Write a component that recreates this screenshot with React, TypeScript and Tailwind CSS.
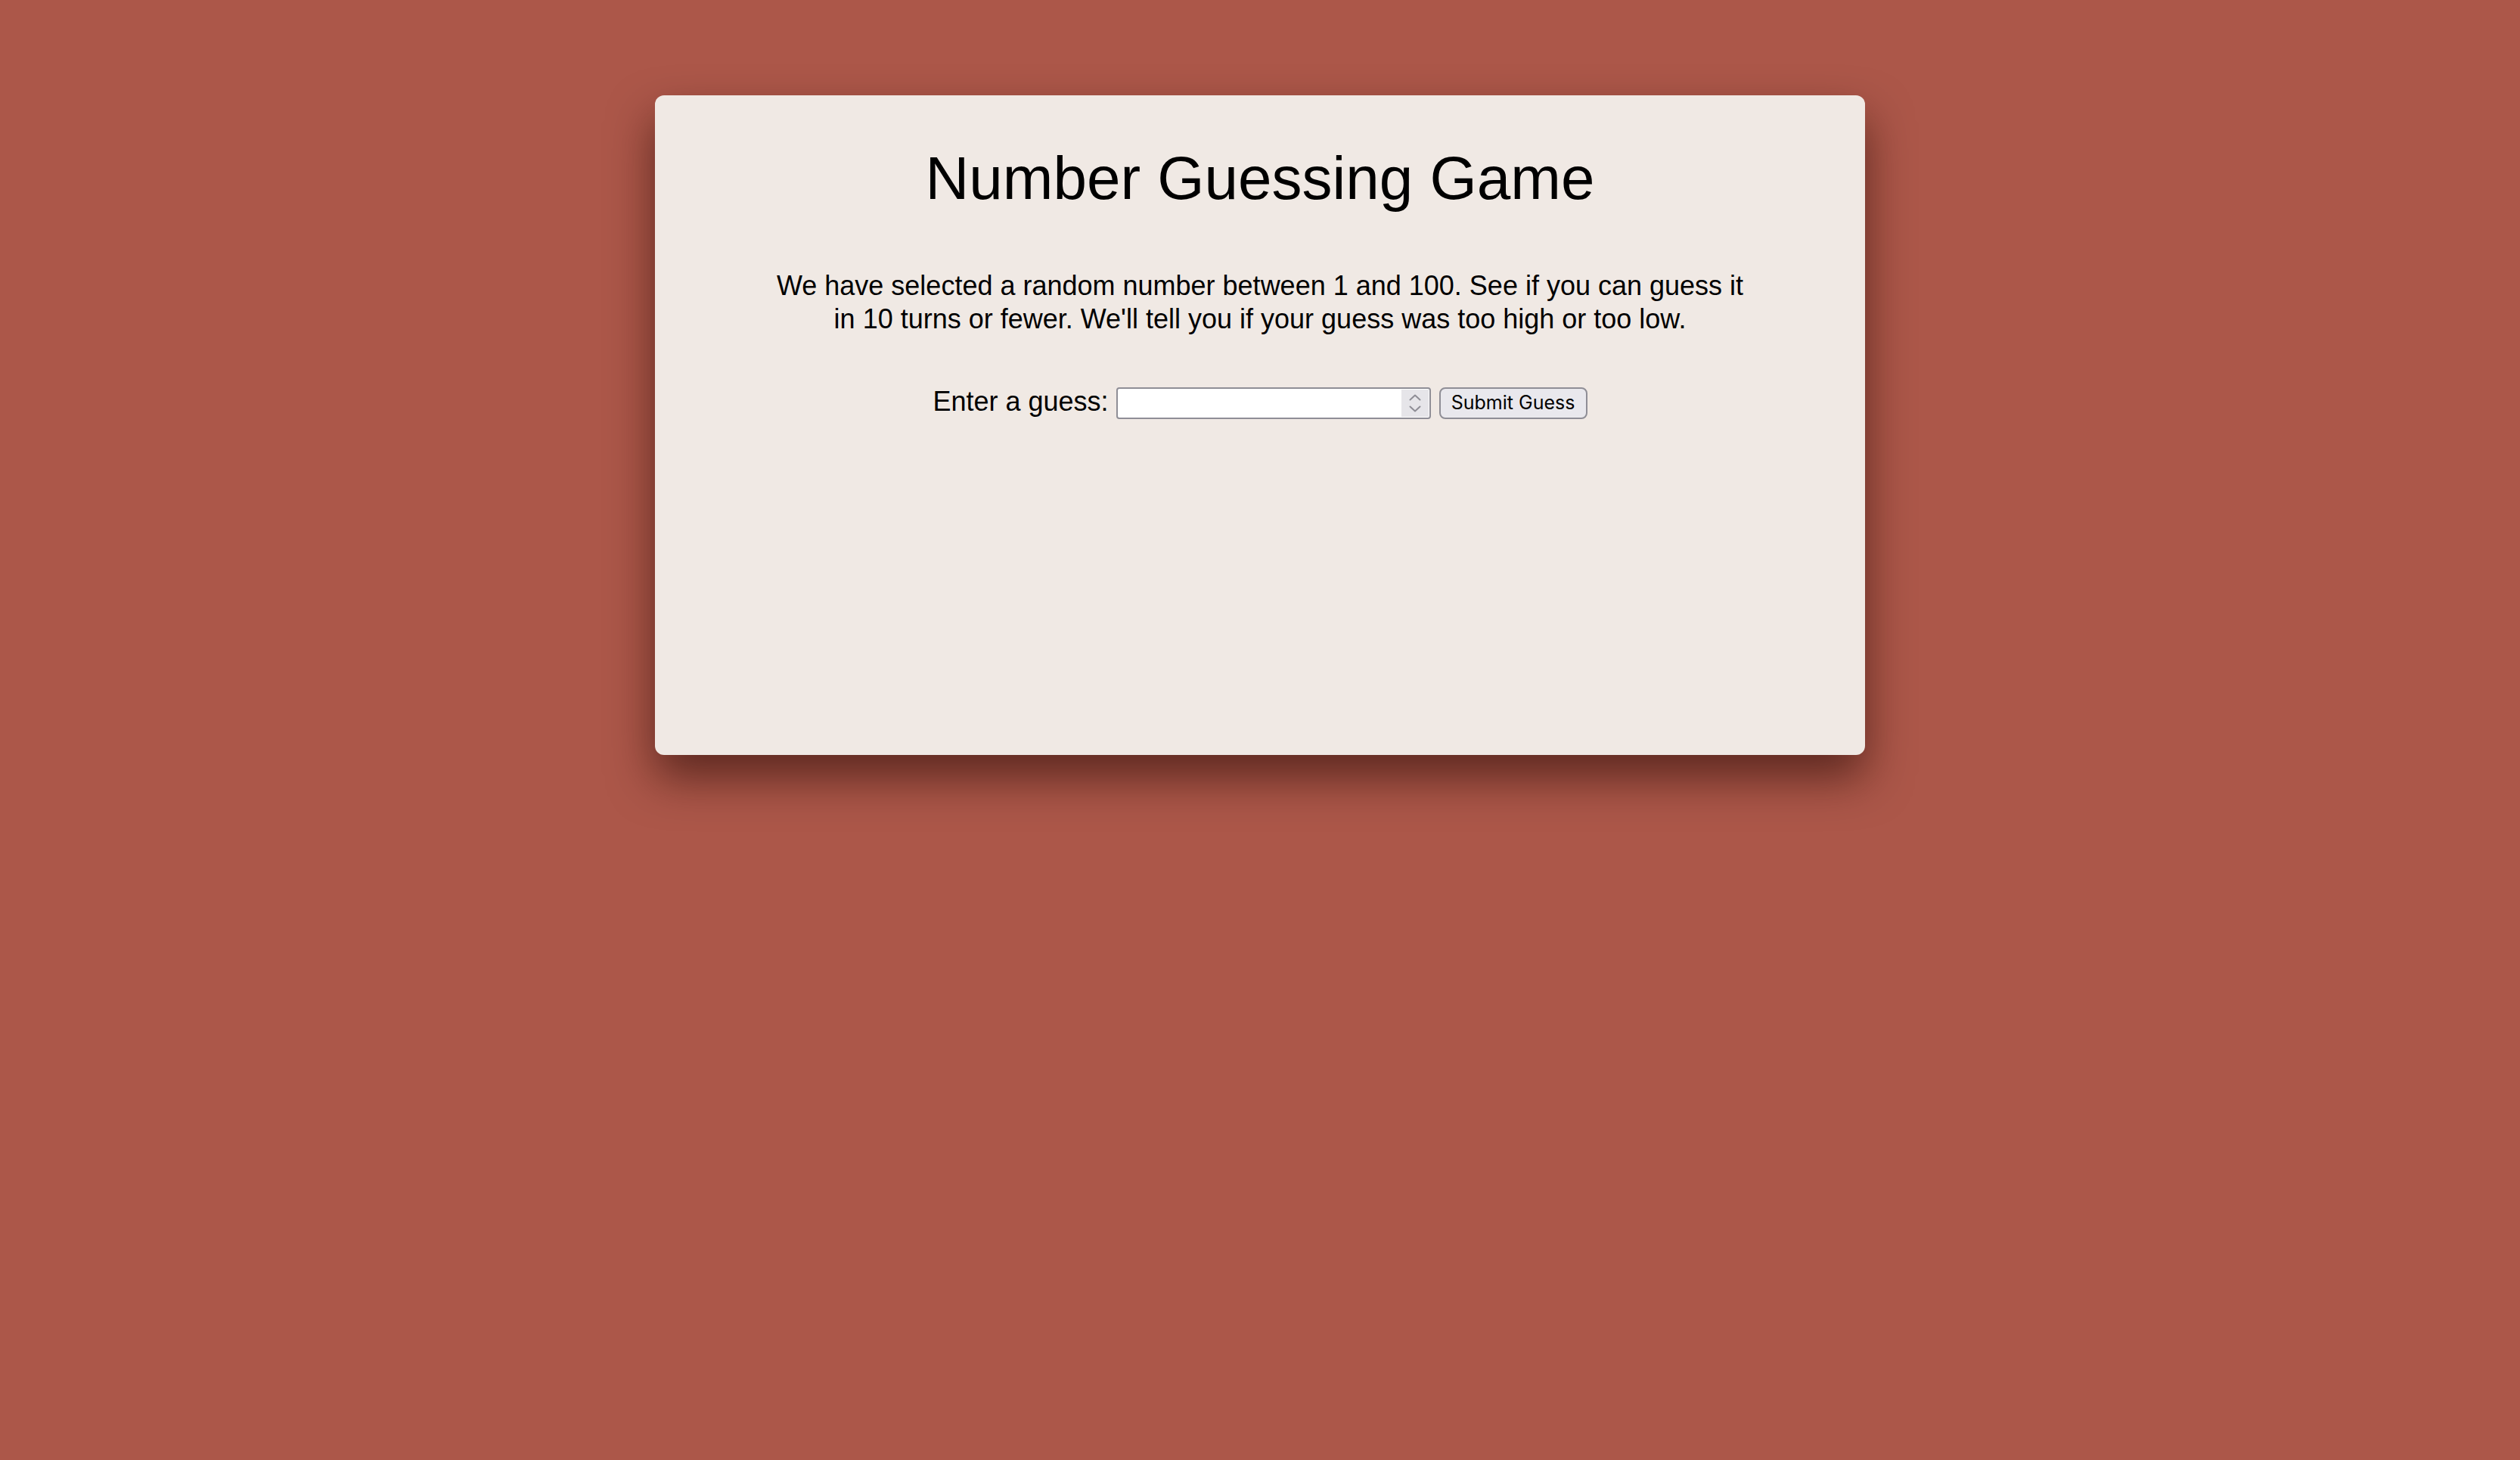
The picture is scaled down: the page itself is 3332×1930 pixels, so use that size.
import { useState } from "react";

const Spinner = () => (
  <div className="flex flex-col items-center justify-center gap-[6px] w-[36px] h-[36px] bg-[#e6e5e9] mr-[1px]">
    <svg width="16" height="9" viewBox="0 0 16 9" fill="none">
      <path d="M1.5 7.5 L8 1.5 L14.5 7.5" stroke="#8e8d95" strokeWidth="2" strokeLinecap="round" strokeLinejoin="round" />
    </svg>
    <svg width="16" height="9" viewBox="0 0 16 9" fill="none">
      <path d="M1.5 1.5 L8 7.5 L14.5 1.5" stroke="#8e8d95" strokeWidth="2" strokeLinecap="round" strokeLinejoin="round" />
    </svg>
  </div>
);

const App = () => {
  const [guess, setGuess] = useState("");

  return (
    <div className="min-h-[1930px] w-full bg-[#ac5749] pt-[126px] font-['Liberation_Sans',Arial,sans-serif] text-black">
      <div className="mx-auto w-[1600px] h-[872px] rounded-[12px] bg-[#f0e9e4] shadow-[0_30px_60px_rgba(40,10,5,0.6)] pt-[64px]">
        <h1 className="text-center text-[80px] leading-[92px]">Number Guessing Game</h1>

        <p className="mx-auto mt-[74px] w-[1300px] text-center text-[36px] leading-[44px]">
          We have selected a random number between 1 and 100. See if you can guess it in 10 turns or
          fewer. We'll tell you if your guess was too high or too low.
        </p>

        <div className="mt-[68px] flex items-center justify-center">
          <label htmlFor="guessField" className="text-[36px] leading-[42px] mr-[10px] relative top-[-2px]">
            Enter a guess:
          </label>
          <div className="flex items-center w-[416px] h-[42px] bg-white border-2 border-[#8f8e96] rounded-[4px]">
            <input
              id="guessField"
              type="text"
              value={guess}
              onChange={(e) => setGuess(e.target.value)}
              className="flex-1 min-w-0 h-full px-2 bg-transparent outline-none text-[26px]"
            />
            <Spinner />
          </div>
          <button className="ml-[11px] h-[42px] w-[196px] rounded-[8px] border-2 border-[#8f8e96] bg-[#e9e8ed] text-[25px] font-['Inter',sans-serif] pb-[1px]">
            Submit Guess
          </button>
        </div>
      </div>
    </div>
  );
};

export default App;
